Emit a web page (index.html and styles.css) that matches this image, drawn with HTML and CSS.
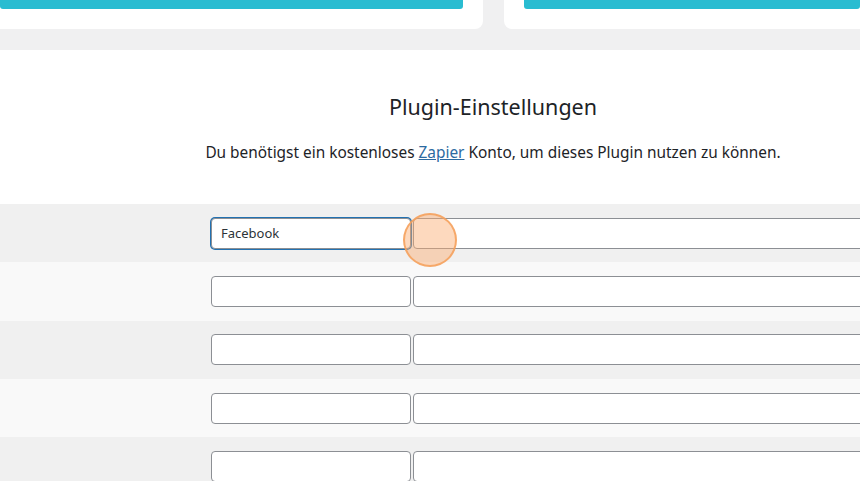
FILE: index.html
```html
<!DOCTYPE html>
<html lang="de">

<head>
    <meta charset="UTF-8">
    <meta name="viewport" content="width=device-width, initial-scale=1.0">
    <title>Plugin-Einstellungen</title>
    <link rel="stylesheet" href="styles.css">
</head>

<body>
    <!-- Karten oben (abgeschnitten) -->
    <div class="cards">
        <div class="card"><div class="card-bar"></div></div>
        <div class="card"><div class="card-bar"></div></div>
    </div>

    <div class="panel">
        <h1>Plugin-Einstellungen</h1>
        <p class="intro">Du benötigst ein kostenloses <a href="#">Zapier</a> Konto, um dieses Plugin nutzen zu können.</p>

        <div class="rows">
            <div class="row">
                <input type="text" class="name focus" value="Facebook">
                <input type="text" class="url">
            </div>
            <div class="row">
                <input type="text" class="name">
                <input type="text" class="url">
            </div>
            <div class="row">
                <input type="text" class="name">
                <input type="text" class="url">
            </div>
            <div class="row">
                <input type="text" class="name">
                <input type="text" class="url">
            </div>
            <div class="row">
                <input type="text" class="name">
                <input type="text" class="url">
            </div>
        </div>
    </div>

    <!-- Klick-Markierung -->
    <div class="click-dot"></div>
</body>

</html>
```

FILE: styles.css
```css
body {
    font-family: "Noto Sans", "Open Sans", sans-serif;
    background-color: #f0f0f1;
    color: #1d2327;
    margin: 0;
    overflow: hidden;
    height: 481px;
}

.cards {
    display: grid;
    grid-template-columns: 503px 1fr;
    gap: 21px;
    margin: 0 -20px;
    height: 29px;
}

.card {
    background-color: #fff;
    border-radius: 0 0 8px 8px;
    padding: 0 20px;
}

.card-bar {
    background-color: #29bcd1;
    height: 9px;
    border-radius: 0 0 3px 3px;
}

.panel {
    background-color: #fff;
    margin-top: 21px;
    padding-top: 42px;
    height: 400px;
}

h1 {
    font-size: 21.5px;
    font-weight: 400;
    line-height: 30px;
    margin: 0 0 0 126px;
    text-align: center;
}

.intro {
    font-size: 15.4px;
    line-height: 22px;
    margin: 20px 0 0 126px;
    text-align: center;
}

.intro a {
    color: #2c6aa1;
}

.rows {
    margin-top: 40px;
}

.row {
    display: flex;
    align-items: center;
    gap: 2px;
    height: 58.3px;
    padding-left: 211px;
    background-color: #f0f0f0;
}

.row:nth-child(even) {
    background-color: #f9f9f9;
}

input[type="text"] {
    box-sizing: border-box;
    height: 31px;
    border: 1px solid #8c8f94;
    border-radius: 4px;
    background-color: #fff;
    padding: 0 9px;
    font-family: "Noto Sans", "Open Sans", sans-serif;
    font-size: 13px;
    color: #2c3338;
    flex-shrink: 0;
}

.name {
    width: 200px;
}

.url {
    width: 520px;
}

.focus {
    border-color: #2271b1;
    box-shadow: 0 0 0 1px #2271b1;
}

.click-dot {
    position: absolute;
    left: 403px;
    top: 213px;
    width: 50px;
    height: 50px;
    border-radius: 50%;
    border: 2px solid rgba(244, 160, 90, 0.85);
    background-color: rgba(250, 170, 110, 0.45);
}
```
